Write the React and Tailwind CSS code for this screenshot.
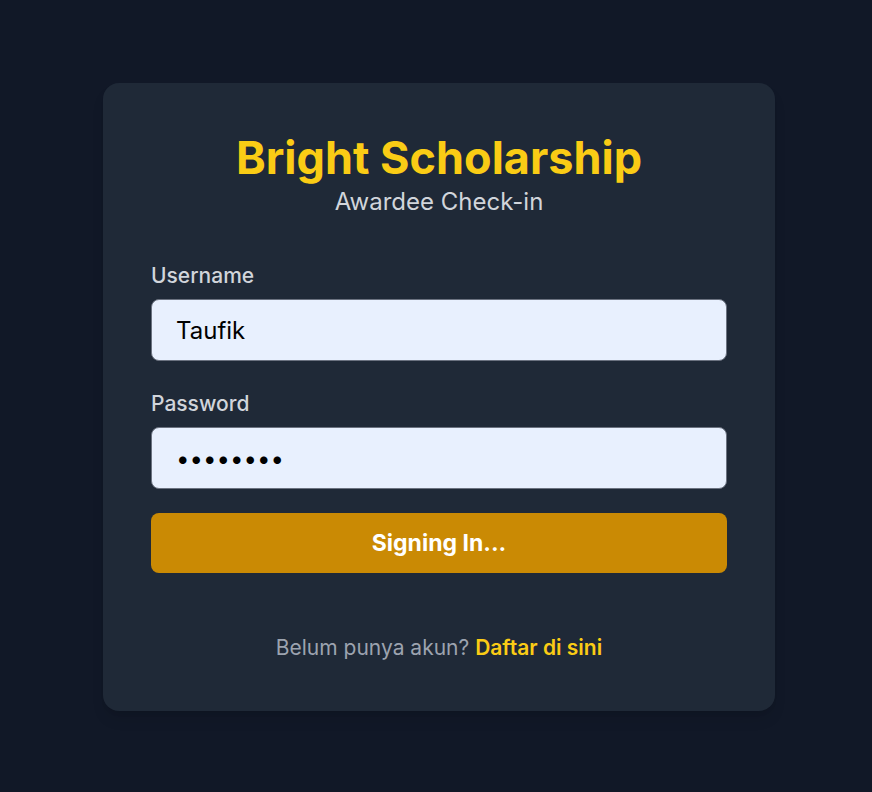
import React from "react";

export default function App() {
  return (
    <div className="min-h-screen w-full bg-[#111827] flex items-center justify-center pl-[6px] pt-[2px] font-['Inter',sans-serif]">
      <div className="w-[672px] rounded-2xl bg-[#1f2937] px-12 pt-12 pb-[51px] shadow-lg">
        <div className="text-center">
          <h1 className="text-[45px] leading-[53px] font-bold text-[#facc15]">Bright Scholarship</h1>
          <p className="mt-[3px] text-[24px] leading-[29px] text-[#d1d5db]">Awardee Check-in</p>
        </div>
        <form className="mt-[47px] flex flex-col" onSubmit={(e) => e.preventDefault()}>
          <label className="text-[21px] leading-[25px] font-medium text-[#d1d5db]">Username</label>
          <input
            readOnly
            value="Taufik"
            className="mt-[11px] h-[62px] w-full rounded-lg border border-[#6b7280] bg-[#e8f0fe] px-6 text-[24px] text-black outline-none"
          />
          <label className="mt-[30px] text-[21px] leading-[25px] font-medium text-[#d1d5db]">Password</label>
          <input
            readOnly
            type="password"
            value="password"
            className="mt-[11px] h-[62px] w-full rounded-lg border border-[#6b7280] bg-[#e8f0fe] px-6 text-[24px] text-black outline-none"
          />
          <button
            type="submit"
            className="mt-[24px] h-[60px] w-full rounded-lg bg-[#ca8a04] text-[23px] font-bold text-white"
          >
            Signing In...
          </button>
        </form>
        <p className="mt-[62px] text-center text-[21px] leading-[25px] text-[#9ca3af]">
          Belum punya akun? <a className="font-semibold text-[#facc15]">Daftar di sini</a>
        </p>
      </div>
    </div>
  );
}
